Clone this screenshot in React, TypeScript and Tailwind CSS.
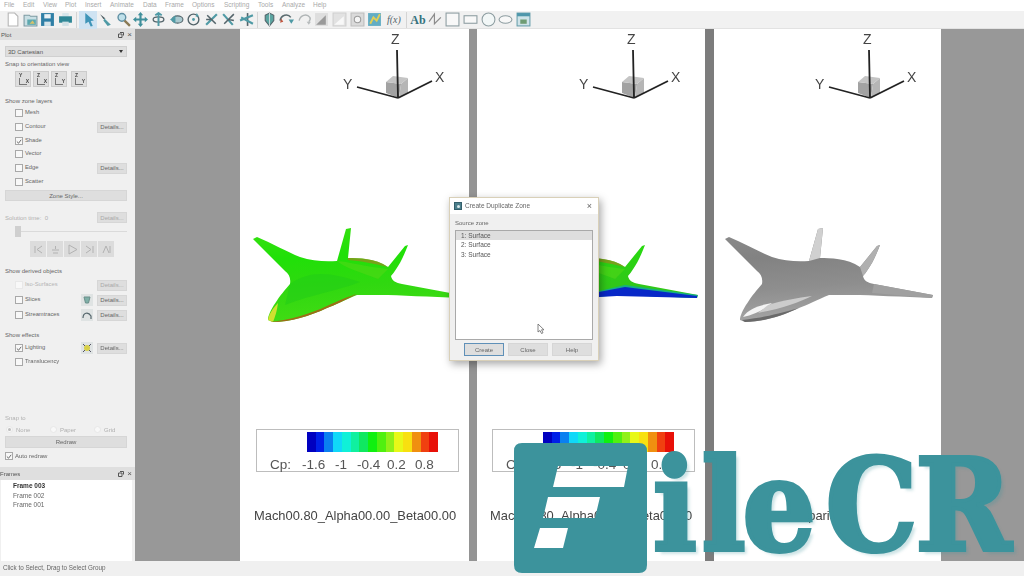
import type { ReactNode } from "react";

const MENUS = [
  ["File", "w-[19px]"],
  ["Edit", "w-[20px]"],
  ["View", "w-[22px]"],
  ["Plot", "w-[20px]"],
  ["Insert", "w-[25px]"],
  ["Animate", "w-[33px]"],
  ["Data", "w-[22px]"],
  ["Frame", "w-[27px]"],
  ["Options", "w-[32px]"],
  ["Scripting", "w-[34px]"],
  ["Tools", "w-[24px]"],
  ["Analyze", "w-[31px]"],
  ["Help", "w-[20px]"],
];

const TEAL = "#4f9aa5";
const DARK = "#54656b";

function Tool({ children, active }: { children: ReactNode; active?: boolean }) {
  return (
    <div className={`w-[17.6px] h-[18px] flex items-center justify-center shrink-0 ${active ? "bg-[#cfe3f2]" : ""}`}>
      <svg width="15" height="15" viewBox="0 0 14 14" fill="none">
        {children}
      </svg>
    </div>
  );
}

function Sep() {
  return <div className="w-px h-[16px] bg-[#d4d4d4] mx-[2px] shrink-0" />;
}

function Rotate({ c = TEAL }: { c?: string }) {
  return (
    <>
      <ellipse cx="7" cy="7" rx="5" ry="2.4" stroke={DARK} strokeWidth="1.2" />
      <path d="M7 1v12M4 3l3-2 3 2" stroke={c} strokeWidth="1.8" />
    </>
  );
}

function Toolbar() {
  return (
    <div className="h-[18px] bg-[#f1f1f1] border-b border-[#e2e2e2] flex items-center pl-[4px] shrink-0">
      <Tool><path d="M3 1h6l3 3v9H3z" fill="#fff" stroke="#b5b5b5" /></Tool>
      <Tool>
        <path d="M1 3h5l1 1h6v9H1z" fill="#c9dfe4" stroke="#7d9aa3" />
        <path d="M4 7h8v5H4z" fill="#5da8b0" />
        <path d="M6 11l3-3 2 3z" fill="#d9c36b" />
      </Tool>
      <Tool>
        <path d="M1 1h12v12H1z" fill="#2f7fa6" />
        <path d="M4 2h6v4H4z" fill="#e9f2f5" />
        <path d="M4 9h6v4H4z" fill="#d5e4ea" />
      </Tool>
      <Tool>
        <path d="M4 1h6v3H4z" fill="#d6e5ea" />
        <path d="M1 4h12v6H1z" fill="#2f8796" />
        <path d="M4 9h6v4H4z" fill="#cfe0e5" />
      </Tool>
      <Sep />
      <Tool active><path d="M4 1l8 7-3 .5 2 4.5-2 .5-2-4.5L4 11z" fill="#3f95b8" /></Tool>
      <Tool>
        <path d="M2 2l5 4-2 .5z" fill="#4a5a60" />
        <path d="M6 6l6 6-3 1-4-5z" fill={TEAL} />
      </Tool>
      <Tool>
        <circle cx="5.5" cy="5" r="3.6" fill="#bfe0ea" stroke="#5f8fa3" strokeWidth="1.3" />
        <path d="M8 8l5 5" stroke="#8a7a55" strokeWidth="2.2" />
      </Tool>
      <Tool><path d="M7 0l2.5 3H8v3h3V4.5L14 7l-3 2.500V8H8v3h1.500L7 14l-2.500-3H6V8H3v1.500L0 7l3-2.500V6h3V3H4.500z" fill="#3f8f9b" /></Tool>
      <Tool><Rotate /></Tool>
      <Tool>
        <ellipse cx="8" cy="7" rx="5" ry="3.4" fill="#a9c9cf" stroke={DARK} />
        <path d="M1 7l5-4v8z" fill={TEAL} />
      </Tool>
      <Tool>
        <circle cx="7" cy="7" r="5" stroke={DARK} strokeWidth="1.300" />
        <circle cx="7" cy="7" r="1.300" fill={TEAL} />
        <path d="M10 1l2 3-3 .5z" fill={TEAL} />
      </Tool>
      <Tool>
        <path d="M2 12L12 2" stroke={TEAL} strokeWidth="2" />
        <path d="M3 3l8 8M2 7h6" stroke={DARK} strokeWidth="1.400" />
      </Tool>
      <Tool>
        <path d="M2 2l9 10" stroke={TEAL} strokeWidth="2" />
        <path d="M12 2L3 11M7 7l5 1" stroke={DARK} strokeWidth="1.400" />
      </Tool>
      <Tool>
        <path d="M8 1v12" stroke={DARK} strokeWidth="1.500" />
        <path d="M1 8l12-5M2 5l11 6" stroke={TEAL} strokeWidth="2" />
      </Tool>
      <Sep />
      <Tool>
        <path d="M3 3l4-2 4 2v5l-4 5-4-5z" fill="#5aa4a0" stroke={DARK} />
        <path d="M7 1v12" stroke="#c9dadb" />
      </Tool>
      <Tool>
        <path d="M1 8c1-5 7-7 10-3" stroke="#5b6c70" strokeWidth="1.500" />
        <path d="M9 7h5l-2.500 4z" fill={TEAL} />
        <path d="M2 6l-1 4 3-1z" fill="#c0553f" />
      </Tool>
      <Tool>
        <path d="M2 8c1-5 7-7 10-3 1 2 0 3-1 4" stroke="#b0b5b6" strokeWidth="1.300" />
        <path d="M9 9h4l-2 3z" fill="#b8bcbd" />
      </Tool>
      <Tool>
        <path d="M1 1h12v12H1z" fill="#dedede" />
        <path d="M2 12l9-9v9z" fill="#9a9a9a" />
      </Tool>
      <Tool>
        <path d="M1 1h12v12H1z" fill="#e2e2e2" stroke="#cfcfcf" />
        <path d="M2 12l9-8v8z" fill="#f8f8f8" />
      </Tool>
      <Tool>
        <path d="M1 1h12v12H1z" fill="#dadada" stroke="#bdbdbd" />
        <circle cx="7" cy="7" r="3" fill="#f5f5f5" stroke="#9c9c9c" />
      </Tool>
      <Tool>
        <path d="M1 1h12v12H1z" fill="#63adc4" />
        <path d="M3 11l3-6 3 3 3-6" stroke="#e2cf55" strokeWidth="1.800" />
      </Tool>
      <div className="w-[21px] h-[18px] flex items-center justify-center font-['Liberation_Serif'] italic text-[10px] text-[#55666c] shrink-0">f(x)</div>
      <Sep />
      <div className="w-[17px] h-[18px] flex items-center justify-center font-['Liberation_Serif'] font-bold text-[12px] text-[#35727d] shrink-0">Ab</div>
      <Tool><path d="M1 9l5-7v9l6-6" stroke="#8c8c8c" strokeWidth="1.100" /></Tool>
      <Tool><rect x="1" y="1" width="12" height="12" fill="#f8f8f8" stroke="#8d9da1" /></Tool>
      <Tool><rect x="1" y="3.500" width="12" height="7" fill="#f8f8f8" stroke="#8d9da1" /></Tool>
      <Tool><circle cx="7" cy="7" r="6" fill="#f2f7f7" stroke="#8d9da1" /></Tool>
      <Tool><ellipse cx="7" cy="7" rx="6" ry="3.500" fill="#f8f8f8" stroke="#8d9da1" /></Tool>
      <Tool>
        <rect x="1" y="1" width="12" height="12" fill="#cfe3e8" stroke="#6aa0ad" />
        <path d="M1 1h12v3H1z" fill="#4f97ab" />
        <path d="M4 7h6v4H4z" fill="#6f9c73" />
      </Tool>
    </div>
  );
}

function Check({ checked, dim }: { checked?: boolean; dim?: boolean }) {
  return (
    <span className={`w-[8px] h-[8px] border bg-[#f8f8f8] flex items-center justify-center shrink-0 ${dim ? "border-[#e8e8e8]" : "border-[#a8a8a8]"}`}>
      {checked && (
        <svg width="7" height="7" viewBox="0 0 7 7" fill="none">
          <path d="M1 3.500l2 2 3-4" stroke="#555" strokeWidth="1" />
        </svg>
      )}
    </span>
  );
}

function Btn({ label, className = "", dim }: { label: string; className?: string; dim?: boolean }) {
  return (
    <div className={`h-[11px] bg-[#dedede] border border-[#d6d6d6] flex items-center justify-center text-[6px] leading-none ${dim ? "text-[#a8a8a8]" : "text-[#666]"} ${className}`}>
      {label}
    </div>
  );
}

function Heading({ label, className = "", dim }: { label: string; className?: string; dim?: boolean }) {
  return <div className={`pl-[5px] text-[6px] leading-[10px] h-[10px] ${dim ? "text-[#b0b0b0]" : "text-[#666]"} ${className}`}>{label}</div>;
}

function LayerRow({
  label,
  checked,
  dim,
  details,
  icon,
  className = "",
}: {
  label: string;
  checked?: boolean;
  dim?: boolean;
  details?: boolean;
  icon?: ReactNode;
  className?: string;
}) {
  return (
    <div className={`h-[12px] pl-[15px] pr-[8px] flex items-center ${className}`}>
      <Check checked={checked} dim={dim} />
      <span className={`ml-[2px] text-[5.800px] leading-none ${dim ? "text-[#b5b5b5]" : "text-[#666]"}`}>{label}</span>
      <div className="ml-auto flex items-center gap-[4px]">
        {icon}
        {details && <Btn label="Details..." dim={dim} className="w-[30px]" />}
      </div>
    </div>
  );
}

function SmallIcon({ children }: { children: ReactNode }) {
  return (
    <div className="w-[12px] h-[12px] bg-[#dfe3e3] flex items-center justify-center">
      <svg width="10" height="10" viewBox="0 0 10 10" fill="none">
        {children}
      </svg>
    </div>
  );
}

function DockHeader({ label, className = "" }: { label: string; className?: string }) {
  return (
    <div className={`bg-[#dfdfdf] flex items-center pr-[3px] shrink-0 ${className}`}>
      <span className="text-[6px] leading-none text-[#555]">{label}</span>
      <svg className="ml-auto" width="6" height="6" viewBox="0 0 6 6" fill="none">
        <path d="M2 .5h3.500v3M.5 2h3.500v3.500H.5z" stroke="#555" />
      </svg>
      <span className="ml-[3px] text-[8px] leading-none text-[#555]">×</span>
    </div>
  );
}

function OrientButton({ a, b, className = "" }: { a: string; b: string; className?: string }) {
  return (
    <div className={`w-[16px] h-[16px] bg-[#dedede] border border-[#cccccc] relative text-[5px] font-bold text-[#444] leading-none ${className}`}>
      <span className="absolute left-[3px] top-[1px]">{a}</span>
      <span className="absolute right-[1px] bottom-[2px]">{b}</span>
      <div className="absolute left-[3px] top-[6px] w-[8px] h-[7px] border-l border-b border-[#777]" />
    </div>
  );
}

function PlayButton({ d }: { d: string }) {
  return (
    <div className="w-[16px] h-[16px] bg-[#dcdcdc] flex items-center justify-center">
      <svg width="11" height="11" viewBox="0 0 11 11" fill="none">
        <path d={d} stroke="#b2b2b2" strokeWidth="1" />
      </svg>
    </div>
  );
}

function Radio({ label, checked }: { label: string; checked?: boolean }) {
  return (
    <div className="flex items-center gap-[3px] w-[42px] shrink-0">
      <span className="w-[7px] h-[7px] rounded-full bg-[#f8f8f8] border border-[#e6e6e6] flex items-center justify-center">
        {checked && <span className="w-[3px] h-[3px] rounded-full bg-[#bdbdbd]" />}
      </span>
      <span className="text-[6px] leading-none text-[#b0b0b0]">{label}</span>
    </div>
  );
}

function PlotPanel() {
  return (
    <aside className="w-[135px] bg-[#f0f0f0] flex flex-col shrink-0">
      <DockHeader label="Plot" className="h-[11px] pl-[1px]" />
      <div className="ml-[5px] mr-[8px] mt-[6px] h-[11px] bg-[#dedede] border border-[#d0d0d0] flex items-center pl-[2px] pr-[3px] text-[6px] leading-none text-[#555]">
        3D Cartesian
        <span className="ml-auto w-0 h-0 border-l-[2.500px] border-r-[2.500px] border-t-[3px] border-l-transparent border-r-transparent border-t-[#333]" />
      </div>
      <Heading label="Snap to orientation view" className="mt-[2px]" />
      <div className="flex gap-[2px] pl-[15px] mt-[2px]">
        <OrientButton a="Y" b="X" />
        <OrientButton a="Z" b="X" />
        <OrientButton a="Z" b="Y" />
        <OrientButton a="Z" b="Y" className="ml-[2px]" />
      </div>
      <Heading label="Show zone layers" className="mt-[9px]" />
      <LayerRow label="Mesh" className="mt-[1px]" />
      <LayerRow label="Contour" details className="mt-[2px]" />
      <LayerRow label="Shade" checked className="mt-[2px]" />
      <LayerRow label="Vector" className="mt-[1px]" />
      <LayerRow label="Edge" details className="mt-[2px]" />
      <LayerRow label="Scatter" className="mt-[2px]" />
      <Btn label="Zone Style..." className="ml-[5px] mr-[8px] mt-[2px]" />
      <div className="mt-[11px] h-[11px] pl-[5px] pr-[8px] flex items-center justify-between">
        <span className="text-[6px] leading-none text-[#b0b0b0]">Solution time:&nbsp; 0</span>
        <Btn label="Details..." dim className="w-[30px]" />
      </div>
      <div className="mt-[3px] h-[11px] pl-[15px] pr-[8px] relative flex items-center">
        <div className="w-full h-px bg-[#dadada]" />
        <div className="absolute left-[15px] top-0 w-[6px] h-[11px] bg-[#cfcfcf]" />
      </div>
      <div className="flex gap-px pl-[30px] mt-[4px]">
        <PlayButton d="M9 2L4 5.500 9 9M2 2v7" />
        <PlayButton d="M2 6h7M5.500 2v3M3 9h5" />
        <PlayButton d="M2 1l8 4.500L2 10z" />
        <PlayButton d="M2 2l5 3.500L2 9M9 2v7" />
        <PlayButton d="M2 9l3-7 3 7M9 2v7" />
      </div>
      <Heading label="Show derived objects" className="mt-[9px]" />
      <LayerRow label="Iso-Surfaces" dim details className="mt-[3px]" />
      <LayerRow
        label="Slices"
        details
        className="mt-[3px]"
        icon={
          <SmallIcon>
            <path d="M2 2h6L6.500 8h-3z" fill="#7fb0a8" stroke="#6b8f8a" />
          </SmallIcon>
        }
      />
      <LayerRow
        label="Streamtraces"
        details
        className="mt-[3px]"
        icon={
          <SmallIcon>
            <path d="M1 8c0-5 5-7 8-2v3" stroke="#55666c" strokeWidth="1.200" />
          </SmallIcon>
        }
      />
      <Heading label="Show effects" className="mt-[9px]" />
      <LayerRow
        label="Lighting"
        checked
        className="mt-[2px]"
        details
        icon={
          <SmallIcon>
            <circle cx="5" cy="5" r="3" fill="#d8d04a" />
            <path d="M1 1l2 2M9 1L7 3M1 9l2-2M9 9L7 7" stroke="#556" />
          </SmallIcon>
        }
      />
      <LayerRow label="Translucency" className="mt-[2px]" />
      <Heading label="Snap to" dim className="mt-[45px]" />
      <div className="flex pl-[6px] gap-[2px] mt-[1px] h-[11px] items-center">
        <Radio label="None" checked />
        <Radio label="Paper" />
        <Radio label="Grid" />
      </div>
      <Btn label="Redraw" className="ml-[5px] mr-[8px] mt-[1px] h-[12px]" />
      <div className="pl-[5px] mt-[2px] h-[12px] flex items-center">
        <Check checked />
        <span className="ml-[2px] text-[6px] leading-none text-[#666]">Auto redraw</span>
      </div>
      <DockHeader label="Frames" className="h-[13px] mt-[5px]" />
      <div className="flex-1 ml-px mr-[3px] bg-white text-[6.500px] leading-[9.500px] pl-[12px] pt-[1px] text-[#666]">
        <div className="font-bold text-[#333]">Frame 003</div>
        <div>Frame 002</div>
        <div>Frame 001</div>
      </div>
    </aside>
  );
}

function Axes({ className = "" }: { className?: string }) {
  return (
    <svg className={`absolute top-[5px] ${className}`} width="110" height="70" viewBox="0 0 110 70" fill="none">
      <path d="M47 48L62 50 60 64 47 59z" fill="#a2a2a2" />
      <path d="M62 50L69 44V59L60 64z" fill="#b6b6b6" />
      <path d="M47 48L54 42 69 44 62 50z" fill="#c4c4c4" />
      <path d="M58 16l1 48M59 64L18 53M59 64l34-17" stroke="#222" strokeWidth="1.800" />
    </svg>
  );
}

const PLANE_OUTLINE =
  "M253 239 L257 237 C272 243 287 252 300 257 C312 261 325 262 337 261 L346 229 L351 228 L348 258 C358 258 375 258 388 267 L405 246 L408 245 C403 258 398 268 391 276 C392 281 396 283 402 284 L461 295 L460 298 C430 297 400 295 380 295 L357 295 C345 300 335 305 327 308 C310 316 290 322 273 322 L268 320 C268 312 280 295 290 284 C291 278 289 274 285 271 Z";

function Plane({
  id,
  stops,
  className = "",
  children,
}: {
  id: string;
  stops: string[];
  className?: string;
  children?: ReactNode;
}) {
  return (
    <svg className={`absolute top-[196px] blur-[0.6px] ${className}`} width="215" height="100" viewBox="250 225 215 100">
      <defs>
        <linearGradient id={id} x1="0" y1="0" x2="0.15" y2="1">
          {stops.map((c, i) => (
            <stop key={i} offset={i / (stops.length - 1)} stopColor={c} />
          ))}
        </linearGradient>
      </defs>
      <path d={PLANE_OUTLINE} fill={`url(#${id})`} />
      {children}
    </svg>
  );
}

function GreenDetail() {
  return (
    <>
      <path d="M337 261C350 262 362 266 388 269L378 279C360 272 345 268 337 261z" fill="#58d818" opacity="0.5" />
      <path d="M290 284C310 270 330 272 360 282 340 290 310 295 285 305z" fill="#20cc18" opacity="0.5" />
      <path d="M348 258C360 258 375 258 388 267 376 264 360 261 348 260z" fill="#9a8a20" opacity="0.7" />
    </>
  );
}

const BAR = [
  "bg-[#0000c0]",
  "bg-[#0020e8]",
  "bg-[#0a80f0]",
  "bg-[#10d8f8]",
  "bg-[#10f0d8]",
  "bg-[#10f0a0]",
  "bg-[#10e860]",
  "bg-[#10f010]",
  "bg-[#50f010]",
  "bg-[#90f018]",
  "bg-[#e8f818]",
  "bg-[#f8e010]",
  "bg-[#f09010]",
  "bg-[#f04010]",
  "bg-[#e81008]",
];

function Legend({ className = "" }: { className?: string }) {
  return (
    <div className={`absolute top-[400px] w-[203px] h-[43px] bg-white border border-[#bdbdbd] ${className}`}>
      <div className="absolute left-[50px] top-[2px] w-[131px] h-[20px] flex">
        {BAR.map((c, i) => (
          <div key={i} className={`flex-1 ${c}`} />
        ))}
      </div>
      <div className="absolute inset-x-0 top-[27px] text-[13.500px] leading-[16px] text-[#555]">
        <span className="absolute left-[13px]">Cp:</span>
        <span className="absolute left-[45px]">-1.6</span>
        <span className="absolute left-[78px]">-1</span>
        <span className="absolute left-[100px]">-0.4</span>
        <span className="absolute left-[130px]">0.2</span>
        <span className="absolute left-[158px]">0.8</span>
      </div>
    </div>
  );
}

function Frame({ width, children }: { width: string; children: ReactNode }) {
  return <div className={`relative bg-white h-full shrink-0 overflow-hidden ${width}`}>{children}</div>;
}

function Caption({ children, className = "" }: { children: ReactNode; className?: string }) {
  return <div className={`absolute top-[479px] text-[12.900px] leading-[16px] text-[#444] whitespace-nowrap ${className}`}>{children}</div>;
}

function AxisLetter({ letter, x, y }: { letter: string; x: number; y: number }) {
  return (
    <span className="absolute text-[14px] leading-none text-[#444]" style={{ left: x, top: y }}>
      {letter}
    </span>
  );
}

function AxisText({ left }: { left: number }) {
  return (
    <>
      <AxisLetter letter="Y" x={left} y={48} />
      <AxisLetter letter="Z" x={left + 48} y={3} />
      <AxisLetter letter="X" x={left + 92} y={41} />
    </>
  );
}

function Canvas() {
  return (
    <main className="flex-1 bg-[#989898] flex pl-[105px]">
      <Frame width="w-[229px]">
        <Axes className="left-[99px]" />
        <AxisText left={103} />
        <Plane id="green1" stops={["#38e010", "#20e008", "#30d810", "#40dc14"]} className="left-[10px]">
          <GreenDetail />
          <path d="M268 320C269 314 273 308 278 303 277 311 275 317 273 322z" fill="#d0e030" />
          <path d="M270 322C290 320 310 314 327 306 340 300 350 296 357 294 345 300 335 305 327 308 310 316 290 322 273 322z" fill="#a06a18" />
        </Plane>
        <Legend className="left-[16px]" />
        <Caption className="left-[14px]">Mach00.80_Alpha00.00_Beta00.00</Caption>
      </Frame>
      <div className="w-[8px] bg-[#949494] shrink-0" />
      <Frame width="w-[228px]">
        <Axes className="left-[98px]" />
        <AxisText left={102} />
        <Plane id="green2" stops={["#38e010", "#28d810", "#30c818", "#30c818"]} className="left-[10px]">
          <GreenDetail />
          <path d="M362 291L388 285 461 295 460 298 380 295 362 297z" fill="#10a8a0" opacity="0.8" />
          <path d="M362 292L388 287 460 296 460 298 380 296 362 297z" fill="#0828c8" />
        </Plane>
        <Legend className="left-[15px]" />
        <Caption className="left-[13px]">Mach00.80_Alpha00.00_Beta00.00</Caption>
      </Frame>
      <div className="w-[9px] bg-[#7c7c7c] shrink-0" />
      <Frame width="w-[227px]">
        <Axes className="left-[97px]" />
        <AxisText left={101} />
        <Plane id="grey3" stops={["#8c8c8c", "#828282", "#8e8e8e", "#a4a4a4"]} className="left-[8px]">
          <path d="M346 229L351 228 348 258 337 261z" fill="#d0d0d0" />
          <path d="M405 246L408 245C403 258 398 268 391 276L388 267z" fill="#b0b0b0" />
          <path d="M402 284L461 295 460 298 400 293z" fill="#a0a0a0" />
          <path d="M271 317C276 309 288 305 300 303 292 310 282 315 271 317z" fill="#f4f4f4" />
          <path d="M296 305C312 300 325 298 340 296 325 303 312 308 286 313z" fill="#cccccc" />
          <path d="M273 322C290 322 310 316 327 308 305 314 290 318 270 320z" fill="#6a6a6a" />
        </Plane>
        <Caption className="left-[67px]">Comparison</Caption>
      </Frame>
    </main>
  );
}

function DuplicateZoneDialog() {
  return (
    <div className="absolute left-[449px] top-[197px] w-[150px] h-[164px] bg-[#f0f0f0] border border-[#d9d0b8] shadow-[2px_3px_8px_rgba(0,0,0,0.35)] flex flex-col">
      <div className="h-[16px] bg-white flex items-center pl-[4px] pr-[6px] shrink-0">
        <div className="w-[8px] h-[8px] bg-[#4c7f8c] border border-[#345f6b] flex items-center justify-center">
          <span className="w-[3px] h-[3px] rounded-full bg-[#d9e8ea]" />
        </div>
        <span className="ml-[3px] text-[6.500px] leading-none text-[#666]">Create Duplicate Zone</span>
        <span className="ml-auto text-[9px] leading-none text-[#666]">×</span>
      </div>
      <div className="mt-[5px] pl-[5px] text-[6px] leading-[9px] text-[#666]">Source zone</div>
      <div className="mt-[2px] mx-[5px] h-[110px] bg-white border border-[#a9a9a9] text-[6.500px] leading-[9.300px] text-[#555] flex flex-col">
        <div className="bg-[#dedede] pl-[5px]">1: Surface</div>
        <div className="pl-[5px]">2: Surface</div>
        <div className="pl-[5px]">3: Surface</div>
      </div>
      <div className="mt-[3px] pl-[14px] flex gap-[4px]">
        <Btn label="Create" className="w-[40px] h-[13px] !border-[#5f90b8]" />
        <Btn label="Close" className="w-[40px] h-[13px]" />
        <Btn label="Help" className="w-[40px] h-[13px]" />
      </div>
      <svg className="absolute left-[87px] top-[125px]" width="8" height="11" viewBox="0 0 8 11">
        <path d="M1 1v8l2-1.500 1.500 3 1.500-.7-1.500-3H7z" fill="#fff" stroke="#666" strokeWidth="0.800" />
      </svg>
    </div>
  );
}

function Watermark() {
  return (
    <>
      <svg className="absolute left-[514px] top-[443px]" width="133" height="130" viewBox="0 0 133 130">
        <path
          fillRule="evenodd"
          fill="#3c939c"
          d="M8 0H125Q133 0 133 8V122Q133 130 125 130H8Q0 130 0 122V8Q0 0 8 0Z M44 23L114 23 110 44 39 44Z M34 54L86 54 81 75 29 75Z M26 85L54 85 49 105 20 105Z"
        />
      </svg>
      <div className="absolute left-[653px] top-[425px] h-[160px] font-['DejaVu_Serif_Condensed','DejaVu_Serif',serif] font-bold text-[128px] leading-[160px] text-[#3c939c] whitespace-nowrap [-webkit-text-stroke:4px_#3c939c] [text-shadow:4px_4px_3px_rgba(60,147,156,0.25)]">
        i<span className="ml-[5px]">l</span>
        <span className="-ml-[3px]">e</span>
        <span className="ml-[10px]">C</span>
        <span className="-ml-[2px]">R</span>
      </div>
    </>
  );
}

export default function App() {
  return (
    <div className="relative w-[1024px] h-[576px] overflow-hidden bg-white flex flex-col font-['Liberation_Sans',sans-serif]">
      <div className="absolute inset-0 flex flex-col blur-[0.5px]">
        <nav className="h-[11px] bg-white flex items-center pl-[4px] shrink-0">
          {MENUS.map(([label, w]) => (
            <span key={label} className={`${w} text-[6.500px] leading-none text-[#a9a9a9] shrink-0`}>
              {label}
            </span>
          ))}
        </nav>
        <Toolbar />
        <div className="flex-1 flex min-h-0">
          <PlotPanel />
          <Canvas />
        </div>
        <footer className="h-[15px] bg-[#f0f0f0] flex items-center pl-[3px] text-[6.300px] leading-none text-[#666] shrink-0">
          Click to Select, Drag to Select Group
        </footer>
        <DuplicateZoneDialog />
      </div>
      <Watermark />
    </div>
  );
}
